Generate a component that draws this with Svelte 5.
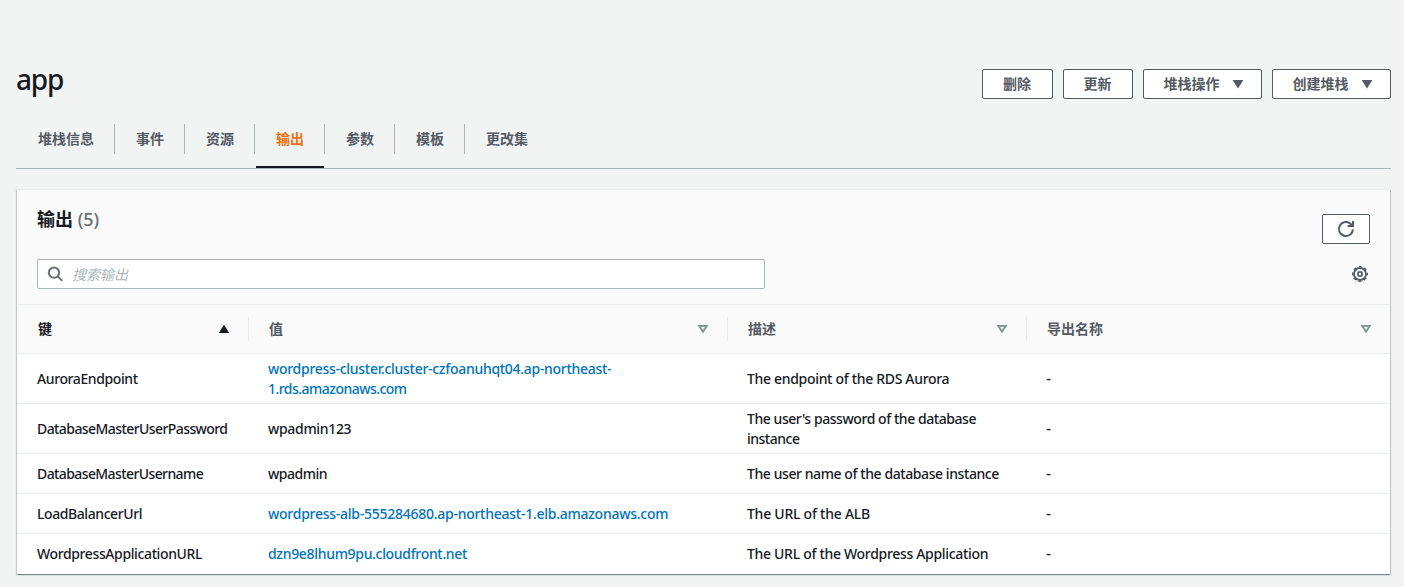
<script>
  const tabs = ['堆栈信息', '事件', '资源', '输出', '参数', '模板', '更改集'];
  const columns = ['键', '值', '描述', '导出名称'];
  // Each text is paired with its letter spacing in pixels.
  const rows = [
    { key: ['AuroraEndpoint', -0.4], value: [['wordpress-cluster.cluster-czfoanuhqt04.ap-northeast-', -0.29], ['1.rds.amazonaws.com', -0.53]], link: true, desc: [['The endpoint of the RDS Aurora', -0.32]] },
    { key: ['DatabaseMasterUserPassword', -0.58], value: [['wpadmin123', -0.32]], link: false, desc: [["The user's password of the database", -0.44], ['instance', -0.5]] },
    { key: ['DatabaseMasterUsername', -0.6], value: [['wpadmin', -0.5]], link: false, desc: [['The user name of the database instance', -0.42]] },
    { key: ['LoadBalancerUrl', -0.42], value: [['wordpress-alb-555284680.ap-northeast-1.elb.amazonaws.com', -0.26]], link: true, desc: [['The URL of the ALB', -0.25]] },
    { key: ['WordpressApplicationURL', -0.38], value: [['dzn9e8lhum9pu.cloudfront.net', -0.32]], link: true, desc: [['The URL of the Wordpress Application', -0.31]] }
  ];
</script>

{#snippet text([label, spacing])}
  <div style:letter-spacing="{spacing}px">{label}</div>
{/snippet}

<main>
  <header class="title-bar">
    <h1>app</h1>
    <div class="actions">
      <button class="b71">删除</button>
      <button class="b70">更新</button>
      <button class="b119">堆栈操作<svg width="12" height="10" viewBox="0 0 12 10"><path d="M.6 .9h10.800L6 9.400z" /></svg></button>
      <button class="b119">创建堆栈<svg width="12" height="10" viewBox="0 0 12 10"><path d="M.6 .9h10.800L6 9.400z" /></svg></button>
    </div>
  </header>

  <nav class="tabs">
    {#each tabs as tab, i}
      <div class="tab" class:active={i === 3}><span>{tab}</span></div>
    {/each}
  </nav>

  <section class="panel">
    <div class="panel-head">
      <div class="heading">
        <h2>输出 <span>(5)</span></h2>
        <button class="refresh" aria-label="刷新">
          <svg width="18" height="18" viewBox="0 0 18 18"><path d="M15.900 9.400A7 7 0 1 1 13.700 3.900L15 5.200" /><path d="M16 1V6H10.600" /><path class="corner" d="M16 2.500V6H12.500z" /></svg>
        </button>
      </div>
      <div class="filter">
        <div class="search">
          <svg width="16" height="16" viewBox="0 0 16 16"><circle cx="7" cy="6.600" r="5.200" /><path d="M10.800 10.400l4.500 4.500" /></svg>
          <span>搜索输出</span>
        </div>
        <svg class="gear" width="16" height="16" viewBox="0 0 16 16"><circle cx="8" cy="8" r="6" /><circle class="teeth" cx="8" cy="8" r="7.200" /><circle cx="8" cy="8" r="2.100" /></svg>
      </div>
    </div>

    <div class="row header">
      {#each columns as col, i}
        <div class="cell" class:sorted={i === 0}>
          <span>{col}</span>
          {#if i === 0}
            <svg class="asc" width="12" height="10" viewBox="0 0 12 10"><path d="M6 .8l5.200 8.200H.8z" /></svg>
          {:else}
            <svg class="desc" width="12" height="10" viewBox="0 0 12 10"><path d="M2.300 2h7.400L6 7.700z" /></svg>
          {/if}
        </div>
      {/each}
    </div>
    {#each rows as r}
      <div class="row" class:tall={r.value.length > 1 || r.desc.length > 1}>
        <div class="cell">{@render text(r.key)}</div>
        <div class="cell" class:link={r.link}>
          {#each r.value as line}{@render text(line)}{/each}
        </div>
        <div class="cell">
          {#each r.desc as line}{@render text(line)}{/each}
        </div>
        <div class="cell dash">-</div>
      </div>
    {/each}
  </section>
</main>

<style>
  :global(body) { background: #f2f3f3; }
  main {
    box-sizing: border-box;
    height: 587px;
    padding: 69px 13px 0 16px;
    overflow: hidden;
    background: #f2f3f3;
    color: #16191f;
    font: 500 14px/20px 'Noto Sans', 'Noto Sans CJK SC', sans-serif;
  }
  .title-bar { display: flex; justify-content: space-between; height: 55px; }
  h1 { margin: -8px 0 0; font-size: 28px; line-height: 36px; font-weight: 500; letter-spacing: -1.2px; }
  .actions { display: flex; gap: 10px; }
  button {
    box-sizing: border-box;
    display: flex;
    align-items: center;
    justify-content: center;
    height: 30px;
    padding: 0 0 2px;
    border: 1px solid #545b64;
    border-radius: 2px;
    background: #fff;
    color: #545b64;
    font: 700 14px/20px 'Noto Sans CJK SC', sans-serif;
  }
  .b71 { width: 71px; padding-right: 1px; }
  .b70 { width: 70px; padding-right: 1px; }
  .b119 { width: 119px; gap: 12px; padding-left: 2px; }
  button svg { fill: #545b64; }
  .b119 svg { margin-top: 2px; }

  .tabs {
    display: flex;
    height: 44px;
    border-bottom: 1px solid #aab7b8;
    font: 700 14px/28px 'Noto Sans CJK SC', sans-serif;
    color: #545b64;
  }
  .tab { box-sizing: border-box; height: 44px; padding: 0; }
  .tab span { display: block; box-sizing: border-box; height: 30px; padding: 0 20px 0 21px; border-right: 1px solid #aab7b8; }
  .tab:first-child span { padding-left: 22px; }
  .tab:last-child span { border-right: 0; }
  .tab.active { color: #ec7211; background: linear-gradient(#16191f, #16191f) 1px 42px / 68px 2px no-repeat; }

  .panel {
    margin: 20px 1px 0;
    border-top: 1px solid #eaeded;
    background: #fff;
    box-shadow: 0 1px 1px 0 rgba(0, 28, 36, .3), 1px 1px 1px 0 rgba(0, 28, 36, .15), -1px 1px 1px 0 rgba(0, 28, 36, .15);
  }
  .panel-head { box-sizing: border-box; height: 114px; padding: 15px 20px 0; background: #fafafa; }
  .heading { display: flex; justify-content: space-between; height: 54px; }
  h2 { margin: 0; font: 700 18px/28px 'Noto Sans', 'Noto Sans CJK SC', sans-serif; }
  h2 span { color: #687078; font-weight: 500; }
  .refresh { width: 48px; margin-top: 9px; padding: 0; }
  .refresh svg { fill: none; stroke: #545b64; stroke-width: 2; }
  .refresh .corner { fill: #545b64; stroke: none; }
  .filter { display: flex; justify-content: space-between; align-items: center; height: 30px; }
  .search {
    box-sizing: border-box;
    display: flex;
    align-items: center;
    gap: 9px;
    width: 728px;
    height: 30px;
    padding-left: 9px;
    border: 1px solid #aab7b8;
    border-radius: 2px;
    background: #fff;
    color: #aab7b8;
    font: italic 400 14px/20px 'Noto Sans CJK SC', sans-serif;
  }
  .search svg { fill: none; stroke: #687078; stroke-width: 2; }
  .gear { margin-right: 2px; fill: none; stroke: #545b64; stroke-width: 1.8; }
  .gear .teeth { stroke-width: 1.5; stroke-dasharray: 3 2.655; stroke-dashoffset: 1.5; }

  .row {
    box-sizing: border-box;
    display: grid;
    grid-template-columns: 231px 479px 299px 1fr;
    align-items: center;
    height: 40px;
    border-bottom: 1px solid #eaeded;
  }
  .row.tall { height: 50px; }
  .row:last-child { border-bottom-color: #fff; }
  .cell { padding-left: 20px; white-space: nowrap; }
  .dash { font-family: Lato, sans-serif; font-weight: 700; }
  .link { color: #0073bb; }
  .row.header {
    grid-template-columns: 232px 479px 299px 1fr;
    height: 50px;
    border-top: 1px solid #eaeded;
    background: #fafafa;
    color: #545b64;
    font: 700 14px/20px 'Noto Sans CJK SC', sans-serif;
  }
  .header .cell {
    box-sizing: border-box;
    display: flex;
    align-items: center;
    justify-content: space-between;
    height: 24px;
    padding: 0 18px 0 20px;
    border-right: 1px solid #eaeded;
  }
  .header .cell:first-child { padding-left: 21px; }
  .header .cell span { margin-top: -2px; }
  .header .cell:last-child { border-right: 0; }
  .header .sorted { color: #16191f; }
  .asc { fill: #16191f; }
  .desc { fill: none; stroke: #879596; stroke-width: 2; }
</style>
